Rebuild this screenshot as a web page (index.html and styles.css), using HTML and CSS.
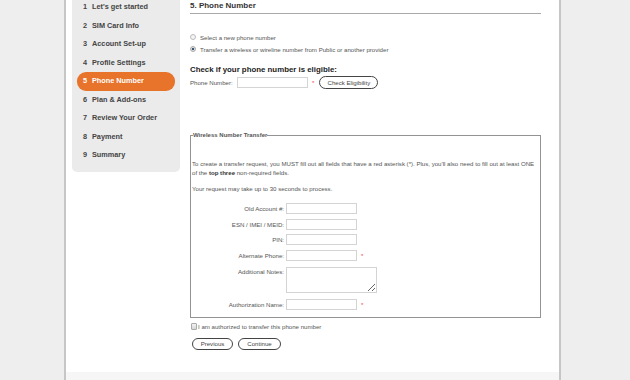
FILE: index.html
```html
<!DOCTYPE html>
<html lang="en">
<head>
    <meta charset="UTF-8">
    <meta name="viewport" content="width=device-width, initial-scale=1.0">
    <title>Phone Number</title>
    <link rel="stylesheet" href="styles.css">
</head>
<body>

<div id="page">
    <div class="layout">

        <!-- steps of the order -->
        <ul class="steps">
            <li><span class="num">1</span>Let's get started</li>
            <li><span class="num">2</span>SIM Card Info</li>
            <li><span class="num">3</span>Account Set-up</li>
            <li><span class="num">4</span>Profile Settings</li>
            <li class="active"><span class="num">5</span>Phone Number</li>
            <li><span class="num">6</span>Plan &amp; Add-ons</li>
            <li><span class="num">7</span>Review Your Order</li>
            <li><span class="num">8</span>Payment</li>
            <li><span class="num">9</span>Summary</li>
        </ul>

        <div class="main">
            <h2>5. Phone Number</h2>

            <div class="choice">
                <label class="radio-row"><input type="radio" name="numtype"> Select a new phone number</label>
                <label class="radio-row"><input type="radio" name="numtype" checked> Transfer a wireless or wireline number from Public or another provider</label>
            </div>

            <h3>Check if your phone number is eligible:</h3>
            <div class="check-row">
                <label for="phone" class="check-label">Phone Number:</label>
                <input type="text" id="phone" class="field">
                <span class="req">*</span>
                <button type="button" class="button wide">Check Eligibility</button>
            </div>

            <fieldset class="transfer">
                <legend>Wireless Number Transfer</legend>
                <p class="intro">To create a transfer request, you MUST fill out all fields that have a red asterisk (*). Plus, you'll also need to fill out at least ONE of the <b>top three</b> non-required fields.</p>
                <p class="note">Your request may take up to 30 seconds to process.</p>

                <div class="form-row">
                    <label for="acct">Old Account #:</label>
                    <input type="text" id="acct" class="field">
                </div>
                <div class="form-row">
                    <label for="esn">ESN / IMEI / MEID:</label>
                    <input type="text" id="esn" class="field">
                </div>
                <div class="form-row">
                    <label for="pin">PIN:</label>
                    <input type="text" id="pin" class="field">
                </div>
                <div class="form-row">
                    <label for="alt">Alternate Phone:</label>
                    <input type="text" id="alt" class="field">
                    <span class="req">*</span>
                </div>
                <div class="form-row top">
                    <label for="notes">Additional Notes:</label>
                    <textarea id="notes" class="field notes"></textarea>
                </div>
                <div class="form-row">
                    <label for="auth">Authorization Name:</label>
                    <input type="text" id="auth" class="field">
                    <span class="req">*</span>
                </div>
            </fieldset>

            <label class="agree"><input type="checkbox"> I am authorized to transfer this phone number</label>

            <div class="actions">
                <button type="button" class="button">Previous</button>
                <button type="button" class="button">Continue</button>
            </div>
        </div>

    </div>
    <div class="footer"></div>
</div>

</body>
</html>
```

FILE: styles.css
```css
body {
    margin: 0;
    background-color: #eeeeee;
    font-family: "Liberation Sans", Arial, sans-serif;
    color: #555;
    overflow: hidden;
}

#page {
    width: 493px;
    margin-left: 64px;
    background-color: #fff;
    border-left: 2px solid #c6c6c6;
    border-right: 2px solid #c6c6c6;
}

.layout {
    display: flex;
    gap: 10px;
    height: 372px;
    padding-left: 6px;
}

/* sidebar steps */
.steps {
    list-style: none;
    width: 98px;
    margin: -2px 0 0 0;
    padding: 0 5px 7px;
    background-color: #ebebeb;
    border-radius: 0 0 5px 5px;
    align-self: flex-start;
}
.steps li {
    height: 18.5px;
    line-height: 18.5px;
    padding-left: 6px;
    font-size: 7.3px;
    font-weight: bold;
    color: #444;
    border-radius: 9px;
}
.steps li.active {
    background-color: #e8732a;
    color: #fff;
}
.num {
    display: inline-block;
    width: 9px;
}

/* main column */
.main {
    width: 351px;
}
.main h2 {
    margin: 0;
    font-size: 8px;
    line-height: 12px;
    padding-bottom: 1px;
    color: #333;
    border-bottom: 1px solid #a8a8a8;
}

.choice {
    margin-top: 17px;
}
.radio-row {
    display: flex;
    align-items: center;
    height: 12px;
    font-size: 6.1px;
}
.radio-row input {
    appearance: none;
    width: 6px;
    height: 6px;
    margin: 0 4px 0 0;
    border: 1px solid #bbb;
    border-radius: 50%;
    background: #f4f4f4;
    box-sizing: border-box;
}
.radio-row input:checked {
    background: radial-gradient(circle, #3d5670 45%, #d8dde2 55%);
    border-color: #aaa;
}

.main h3 {
    margin: 10px 0 0 0;
    font-size: 7.85px;
    line-height: 10px;
    color: #222;
}

.check-row {
    display: flex;
    align-items: center;
    height: 15px;
    font-size: 6.1px;
}
.check-label {
    width: 47px;
}

.field {
    width: 71px;
    height: 11px;
    margin: 0;
    padding: 0;
    border: 1px solid #d4d4d4;
    box-sizing: border-box;
    background: #fff;
}
.req {
    color: #e44;
    font-size: 6.1px;
    margin-left: 4px;
}

.button {
    height: 12px;
    padding: 0 8px;
    border: 1.5px solid #444;
    border-radius: 7px;
    background: #fff;
    font-family: inherit;
    font-size: 6.1px;
    color: #444;
    line-height: 8px;
    white-space: nowrap;
}
.button.wide {
    width: 59px;
    height: 13px;
    padding: 0;
    margin-left: 5px;
}

/* transfer box */
.transfer {
    margin: 41px 0 0 0;
    padding: 0 2px 7px 1px;
    border: 1px solid #939393;
}
.transfer legend {
    padding: 0;
    margin-left: 1px;
    font-size: 6px;
    font-weight: bold;
    line-height: 8px;
    color: #555;
}
.transfer p {
    margin: 0;
    font-size: 6.1px;
    line-height: 8.5px;
}
.intro {
    padding-top: 21px;
}
.intro b {
    color: #333;
}
.note {
    margin-top: 7.5px !important;
}

.form-row {
    display: flex;
    align-items: center;
    height: 11px;
    margin-top: 4.5px;
    font-size: 6.1px;
}
.note + .form-row {
    margin-top: 10px;
}
.form-row label {
    width: 92px;
    margin-right: 2px;
    text-align: right;
}
.form-row.top {
    align-items: flex-start;
    height: 26px;
    margin-top: 6px;
}
.form-row.top label {
    padding-top: 1px;
}
.form-row.top + .form-row {
    margin-top: 6px;
}
.notes {
    width: 91px;
    height: 26px;
}

.agree {
    display: flex;
    align-items: center;
    height: 8px;
    margin-top: 5px;
    font-size: 6.1px;
}
.agree input {
    appearance: none;
    width: 6px;
    height: 7px;
    margin: 0 1px 0 1px;
    border: 1px solid #aaa;
    border-radius: 1px;
    background: linear-gradient(#f2f2f2, #d6d6d6);
    box-sizing: border-box;
}

.actions {
    display: flex;
    gap: 5px;
    margin-top: 7px;
    padding-left: 2px;
}
.actions .button {
    width: 41px;
    padding: 0;
}
.actions .button + .button {
    width: 43px;
}

.footer {
    height: 20px;
    background-color: #f6f6f6;
}
```
